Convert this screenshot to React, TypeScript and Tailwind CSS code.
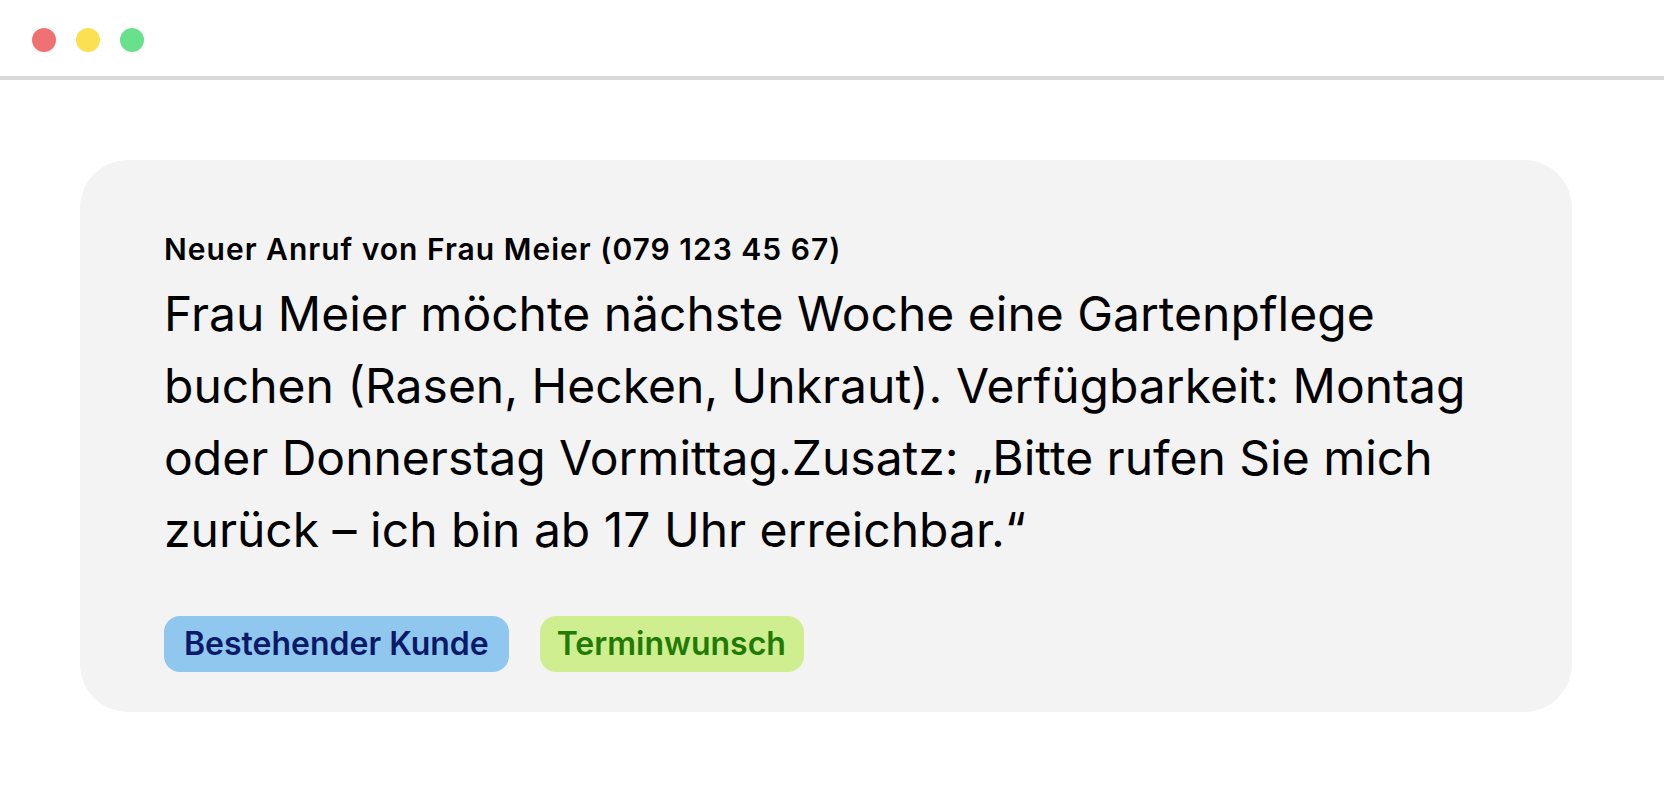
import React from "react";

export default function App() {
  return (
    <div
      className="w-[1664px] h-[812px] bg-white overflow-hidden text-black"
      style={{ fontFamily: "Inter, 'Noto Sans', sans-serif" }}
    >
      {/* Window title bar */}
      <div className="h-[76px] flex items-start pt-[28px] pl-[32px] gap-[20px]">
        <span className="w-[24px] h-[24px] rounded-full bg-[#ef7171]" />
        <span className="w-[24px] h-[24px] rounded-full bg-[#fbe04f]" />
        <span className="w-[24px] h-[24px] rounded-full bg-[#69e08b]" />
      </div>
      <div className="h-[4px] bg-[#d9d9d9]" />

      {/* Card */}
      <div className="ml-[80px] mt-[80px] w-[1492px] rounded-[48px] bg-[#f3f3f3] pt-[69px] pb-[40px] pl-[84px] pr-[84px]">
        <h1 className="text-[30px] leading-[40px] font-semibold tracking-[1px] text-black">
          Neuer Anruf von Frau Meier (079 123 45 67)
        </h1>
        <p className="mt-[9px] text-[48px] leading-[72px] font-normal text-black">
          Frau Meier möchte nächste Woche eine Gartenpflege buchen (Rasen, Hecken, Unkraut). Verfügbarkeit: Montag oder Donnerstag Vormittag.Zusatz: „Bitte rufen Sie mich zurück – ich bin ab 17 Uhr erreichbar.“
        </p>
        <div className="mt-[50px] flex gap-[31px]">
          <span className="h-[56px] flex items-center px-[20px] rounded-[16px] bg-[#8fc7ef] text-[#0b1a68] text-[32px] leading-[48px] font-semibold">
            Bestehender Kunde
          </span>
          <span className="h-[56px] flex items-center pl-[17px] pr-[18px] rounded-[16px] bg-[#cfee8f] text-[#217a02] text-[32px] leading-[48px] font-semibold">
            Terminwunsch
          </span>
        </div>
      </div>
    </div>
  );
}
